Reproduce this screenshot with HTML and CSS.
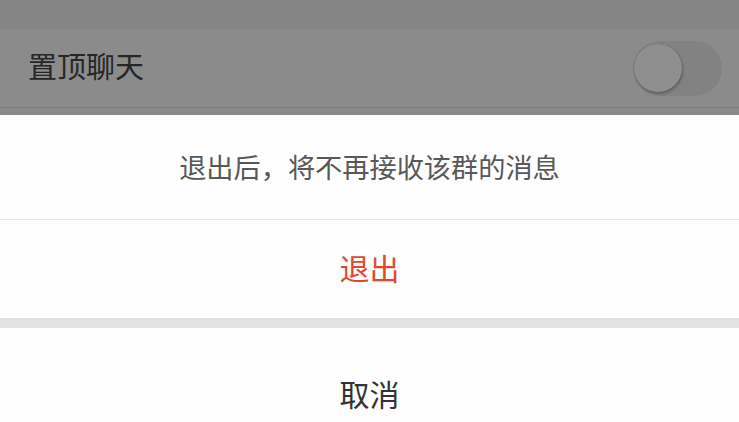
FILE: index.html
```html
<!DOCTYPE html>
<html lang="zh-CN">
<head>
<meta charset="utf-8">
<link rel="stylesheet" href="styles.css">
</head>
<body>
<div class="screen">
  <div class="topbar"></div>
  <div class="row">
    <span class="row-label">置顶聊天</span>
    <div class="switch"><div class="knob"></div></div>
  </div>
  <div class="row-sep"></div>
  <div class="gap"></div>
  <div class="sheet">
    <div class="msg">退出后，将不再接收该群的消息</div>
    <div class="divider"></div>
    <div class="action exit">退出</div>
    <div class="spacer"></div>
    <div class="action cancel">取消</div>
  </div>
</div>
</body>
</html>
```
FILE: styles.css
```css
html, body {
  margin: 0;
  padding: 0;
}
body {
  width: 739px;
  height: 422px;
  overflow: hidden;
  font-family: "Noto Sans CJK SC", "Noto Sans", sans-serif;
  background: #fefefe;
}
.screen {
  display: flex;
  flex-direction: column;
}
.topbar {
  height: 29px;
  background: #858585;
}
.row {
  height: 78px;
  background: #8b8b8b;
  display: flex;
  align-items: center;
  justify-content: space-between;
  padding: 0 17px 0 28px;
}
.row-label {
  font-size: 29px;
  color: #262626;
  line-height: 1;
  margin-bottom: 6px;
}
.switch {
  width: 89px;
  height: 55px;
  border-radius: 28px;
  background: #828282;
  display: flex;
  align-items: center;
  padding-left: 1px;
  box-sizing: border-box;
}
.knob {
  width: 48px;
  height: 48px;
  border-radius: 50%;
  background: #8f8f8f;
  box-shadow: 1px 2px 3px rgba(0,0,0,0.25), 0 0 1px rgba(0,0,0,0.22);
}
.row-sep {
  height: 1px;
  background: #7d7d7d;
}
.gap {
  height: 7px;
  background: #898989;
}
.sheet {
  background: #fefefe;
  display: flex;
  flex-direction: column;
}
.msg {
  height: 104px;
  display: flex;
  align-items: center;
  justify-content: center;
  font-size: 27.2px;
  color: #585858;
  padding-bottom: 2px;
  box-sizing: border-box;
}
.divider {
  height: 1px;
  background: #e6e6e6;
}
.action {
  display: flex;
  justify-content: center;
  font-size: 30px;
  line-height: 30px;
  box-sizing: border-box;
}
.exit {
  height: 98px;
  align-items: center;
  padding-bottom: 4px;
  color: #e0492f;
}
.spacer {
  height: 10px;
  background: #e3e3e3;
}
.cancel {
  height: 94px;
  align-items: flex-start;
  padding-top: 50px;
  color: #333333;
}
```
